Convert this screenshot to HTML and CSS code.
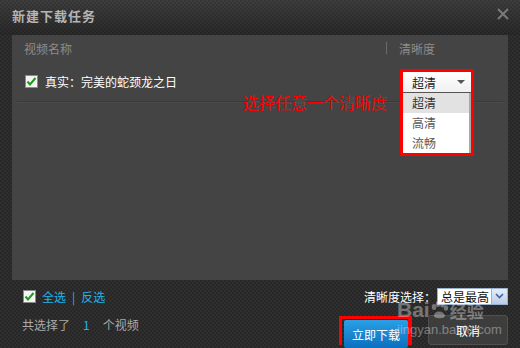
FILE: index.html
```html
<!DOCTYPE html>
<html lang="zh-CN">
<head>
  <meta charset="UTF-8" />
  <title>新建下载任务</title>
  <link rel="stylesheet" href="styles.css">
</head>
<body>
  <div class="dialog">
    <div class="titlebar">
      <span class="title">新建下载任务</span>
      <svg class="close" width="12" height="12" viewBox="0 0 12 12"><path d="M1 1 L11 11 M11 1 L1 11" stroke="#7a7a7a" stroke-width="2"/></svg>
    </div>

    <div class="panel">
      <div class="panel-head">
        <span class="col-name">视频名称</span>
        <span class="divider"></span>
        <span class="col-quality">清晰度</span>
      </div>
      <div class="row">
        <span class="check">
          <svg width="13" height="13" viewBox="0 0 13 13"><rect x="0.5" y="0.5" width="12" height="12" fill="#f4f4f4" stroke="#8a8a8a"/><path d="M2.5 6.5 L5 9.5 L10.5 3" fill="none" stroke="#1c9a1c" stroke-width="2"/></svg>
        </span>
        <span class="row-title">真实：完美的蛇颈龙之日</span>
      </div>

      <div class="note">选择任意一个清晰度</div>

      <div class="quality-menu">
        <div class="menu-select">
          <span>超清</span>
          <span class="caret"></span>
        </div>
        <ul class="menu-list">
          <li class="active">超清</li>
          <li>高清</li>
          <li>流畅</li>
        </ul>
      </div>
    </div>

    <div class="footer">
      <div class="footer-row">
        <div class="pick">
          <span class="check">
            <svg width="13" height="13" viewBox="0 0 13 13"><rect x="0.5" y="0.5" width="12" height="12" fill="#f4f4f4" stroke="#8a8a8a"/><path d="M2.5 6.5 L5 9.5 L10.5 3" fill="none" stroke="#1c9a1c" stroke-width="2"/></svg>
          </span>
          <a class="link">全选</a>
          <span class="sep">|</span>
          <a class="link">反选</a>
        </div>
        <div class="default-quality">
          <span>清晰度选择：</span>
          <div class="small-select">
            <span class="small-value">总是最高</span>
            <span class="small-btn">
              <svg width="9" height="6" viewBox="0 0 9 6"><path d="M1 1 L4.5 4.5 L8 1" fill="none" stroke="#3d64a8" stroke-width="1.6"/></svg>
            </span>
          </div>
        </div>
      </div>
      <div class="footer-row second">
        <div class="count">共选择了<span class="num">1</span>个视频</div>
        <div class="buttons">
          <div class="btn-mark"><button class="btn primary">立即下载</button></div>
          <button class="btn cancel">取消</button>
        </div>
      </div>
    </div>

    <div class="watermark">
      <div class="wm-top">
        <span class="wm-bai">Bai</span>
        <svg width="19" height="18" viewBox="0 0 19 18"><g fill="#fff"><ellipse cx="4" cy="6" rx="2.3" ry="3"/><ellipse cx="8" cy="3" rx="2.3" ry="3"/><ellipse cx="12.5" cy="3.5" rx="2.3" ry="3"/><ellipse cx="16" cy="7" rx="2.2" ry="2.8"/><path d="M4 15 C4 9 14 9 15 15 C15 18 4 18 4 15 Z"/></g></svg>
        <span class="wm-jy">经验</span>
      </div>
      <div class="wm-url">jingyan.baidu.com</div>
    </div>
  </div>
</body>
</html>
```

FILE: styles.css
```css
body {
  margin: 0;
  font-family: "Noto Sans CJK SC", "Liberation Sans", sans-serif;
  font-size: 12px;
}

.dialog {
  position: relative;
  width: 520px;
  height: 348px;
  overflow: hidden;
  background: repeating-conic-gradient(#2f2f2f 0 25%, #272727 0 50%) 0 0 / 4px 4px;
  display: flex;
  flex-direction: column;
}

.titlebar {
  height: 35px;
  display: flex;
  align-items: center;
  justify-content: space-between;
  padding: 0 11px 4px 12px;
  box-sizing: border-box;
  background: linear-gradient(to bottom, rgba(255, 255, 255, 0.07), rgba(0, 0, 0, 0.1));
}

.title {
  color: #b4b4b4;
  font-weight: bold;
  font-size: 13px;
  letter-spacing: 1px;
}

.close {
  margin-top: -4px;
}

.panel {
  position: relative;
  margin: 0 12px;
  height: 245px;
  background-color: #444444;
}

.panel-head {
  height: 26px;
  display: flex;
  align-items: center;
  padding-left: 12px;
  color: #8c8c8c;
}

.col-name {
  flex: 1;
}

.divider {
  width: 1px;
  height: 12px;
  background-color: #6a6a6a;
  margin-right: 12px;
}

.col-quality {
  width: 109px;
}

.row {
  height: 40px;
  margin: 0 5px;
  display: flex;
  align-items: center;
  padding-left: 8px;
  gap: 7px;
  border-bottom: 1px solid #3a3a3a;
  box-shadow: 0 1px 0 #4b4b4b;
  color: #ffffff;
}

.check {
  display: flex;
  width: 13px;
  height: 13px;
}

.note {
  position: absolute;
  left: 231px;
  top: 55px;
  color: #ff0000;
  font-size: 16px;
}

.quality-menu {
  position: absolute;
  left: 388px;
  top: 34px;
  width: 68px;
  border: 3px solid #ff0000;
  background-color: #ffffff;
}

.menu-select {
  height: 20px;
  display: flex;
  align-items: center;
  justify-content: space-between;
  padding: 0 6px 0 9px;
  color: #222;
  background: linear-gradient(to bottom, #ffffff, #f0f0f0);
  border-bottom: 1px solid #555;
}

.caret {
  width: 0;
  height: 0;
  border-left: 4px solid transparent;
  border-right: 4px solid transparent;
  border-top: 4px solid #555;
}

.menu-list {
  list-style: none;
  margin: 0;
  padding: 0;
  border-right: 2px solid #a8a8a8;
}

.menu-list li {
  height: 20px;
  line-height: 20px;
  padding-left: 9px;
  color: #5a5a5a;
}

.menu-list li.active {
  background-color: #e2e2e2;
  color: #333;
}

.footer {
  flex: 1;
  padding: 0 12px 0 22px;
}

.footer-row {
  display: flex;
  align-items: center;
  justify-content: space-between;
  height: 32px;
}

.footer-row.second {
  height: 36px;
  align-items: flex-start;
}

.pick {
  display: flex;
  align-items: center;
  margin-left: 1px;
  color: #1fb4ee;
}

.pick .check {
  margin-right: 6px;
}

.link {
  color: #1fb4ee;
}

.sep {
  margin: 0 6px;
}

.default-quality {
  display: flex;
  align-items: center;
  color: #ffffff;
}

.small-select {
  display: flex;
  width: 71px;
  height: 17px;
  background-color: #ffffff;
  border: 1px solid #9ab0cc;
  box-sizing: border-box;
  margin-left: 1px;
}

.small-value {
  flex: 1;
  color: #111;
  line-height: 15px;
  padding-left: 3px;
}

.small-btn {
  width: 15px;
  display: flex;
  align-items: center;
  justify-content: center;
  background: linear-gradient(to bottom, #e4ecf8, #bccde8);
  border-left: 1px solid #9ab0cc;
}

.count {
  color: #aaaaaa;
  margin-top: 4px;
}

.num {
  color: #1fb4ee;
  margin: 0 13px;
}

.buttons {
  display: flex;
  gap: 16px;
}

.btn-mark {
  border: 3px solid #ff0000;
  border-right-width: 4px;
  padding: 1px 0 0 2px;
  height: 29px;
  box-sizing: border-box;
  margin-top: 4px;
  border-bottom: none;
}

.btn {
  font-family: "Noto Sans CJK SC", "Liberation Sans", sans-serif;
  font-size: 12px;
  color: #ffffff;
  border: none;
  cursor: pointer;
}

.btn.primary {
  width: 64px;
  height: 28px;
  background: linear-gradient(to bottom, #2aa0e6, #0b6fbd);
  border-radius: 2px;
}

.btn.cancel {
  width: 80px;
  height: 30px;
  margin-top: 3px;
  background-color: #3d3d3d;
  border: 1px solid #505050;
  border-radius: 3px;
}

.watermark {
  position: absolute;
  left: 397px;
  top: 300px;
  opacity: 0.35;
  color: #ffffff;
  pointer-events: none;
}

.wm-top {
  display: flex;
  align-items: center;
  height: 20px;
}

.wm-bai {
  font-family: "Liberation Sans", sans-serif;
  font-weight: bold;
  font-size: 21px;
}

.wm-jy {
  font-size: 17px;
  font-weight: bold;
  margin-left: 1px;
}

.wm-url {
  font-family: "Liberation Sans", sans-serif;
  font-size: 13px;
  margin-top: 2px;
}
```
